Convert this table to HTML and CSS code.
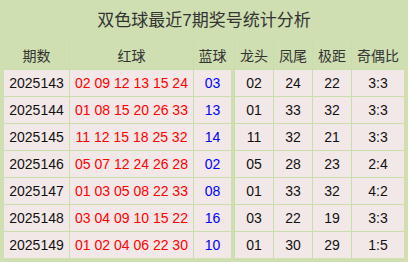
FILE: index.html
```html
<!DOCTYPE html>
<html lang="zh">
<head>
<meta charset="utf-8">
<link rel="stylesheet" href="styles.css">
</head>
<body>
<div class="wrap">
  <div class="title">双色球最近7期奖号统计分析</div>
  <div class="grid">
    <div class="hd">期数</div><div class="hd">红球</div><div class="hd blue-hd">蓝球</div><div class="hd">龙头</div><div class="hd">凤尾</div><div class="hd">极距</div><div class="hd">奇偶比</div>

    <div class="c">2025143</div><div class="c red">02 09 12 13 15 24</div><div class="c blue">03</div><div class="c">02</div><div class="c">24</div><div class="c">22</div><div class="c">3:3</div>
    <div class="c">2025144</div><div class="c red">01 08 15 20 26 33</div><div class="c blue">13</div><div class="c">01</div><div class="c">33</div><div class="c">32</div><div class="c">3:3</div>
    <div class="c">2025145</div><div class="c red">11 12 15 18 25 32</div><div class="c blue">14</div><div class="c">11</div><div class="c">32</div><div class="c">21</div><div class="c">3:3</div>
    <div class="c">2025146</div><div class="c red">05 07 12 24 26 28</div><div class="c blue">02</div><div class="c">05</div><div class="c">28</div><div class="c">23</div><div class="c">2:4</div>
    <div class="c">2025147</div><div class="c red">01 03 05 08 22 33</div><div class="c blue">08</div><div class="c">01</div><div class="c">33</div><div class="c">32</div><div class="c">4:2</div>
    <div class="c">2025148</div><div class="c red">03 04 09 10 15 22</div><div class="c blue">16</div><div class="c">03</div><div class="c">22</div><div class="c">19</div><div class="c">3:3</div>
    <div class="c">2025149</div><div class="c red">01 02 04 06 22 30</div><div class="c blue">10</div><div class="c">01</div><div class="c">30</div><div class="c">29</div><div class="c">1:5</div>
  </div>
</div>
</body>
</html>
```
FILE: styles.css
```css
html, body {
  margin: 0;
  padding: 0;
  background: #cfdfb1;
}
body {
  font-family: "Liberation Sans", "Noto Sans CJK SC", sans-serif;
  width: 408px;
  height: 262px;
  overflow: hidden;
}
.wrap {
  padding: 0 4px 4px 4px;
}
.title {
  height: 40px;
  line-height: 42px;
  text-align: center;
  font-size: 17px;
  color: #333;
}
.grid {
  display: grid;
  grid-template-columns: 65px 123px 40px 38px 38px 38px 52px;
  grid-template-rows: 29px repeat(7, 26px);
  gap: 1px;
  background: #c8dfab;
}
.hd {
  background: #cfdfb1;
  display: flex;
  align-items: center;
  justify-content: center;
  font-size: 14px;
  color: #333;
  padding-top: 1px;
}
.blue-hd {
  padding-right: 3px;
}
.c {
  background: #f3e8e8;
  display: flex;
  align-items: center;
  justify-content: center;
  font-size: 14px;
  color: #111;
}
.red {
  color: #ff0000;
}
.blue {
  color: #0000ff;
  border-right: 3px solid #cfdfb1;
}
```
